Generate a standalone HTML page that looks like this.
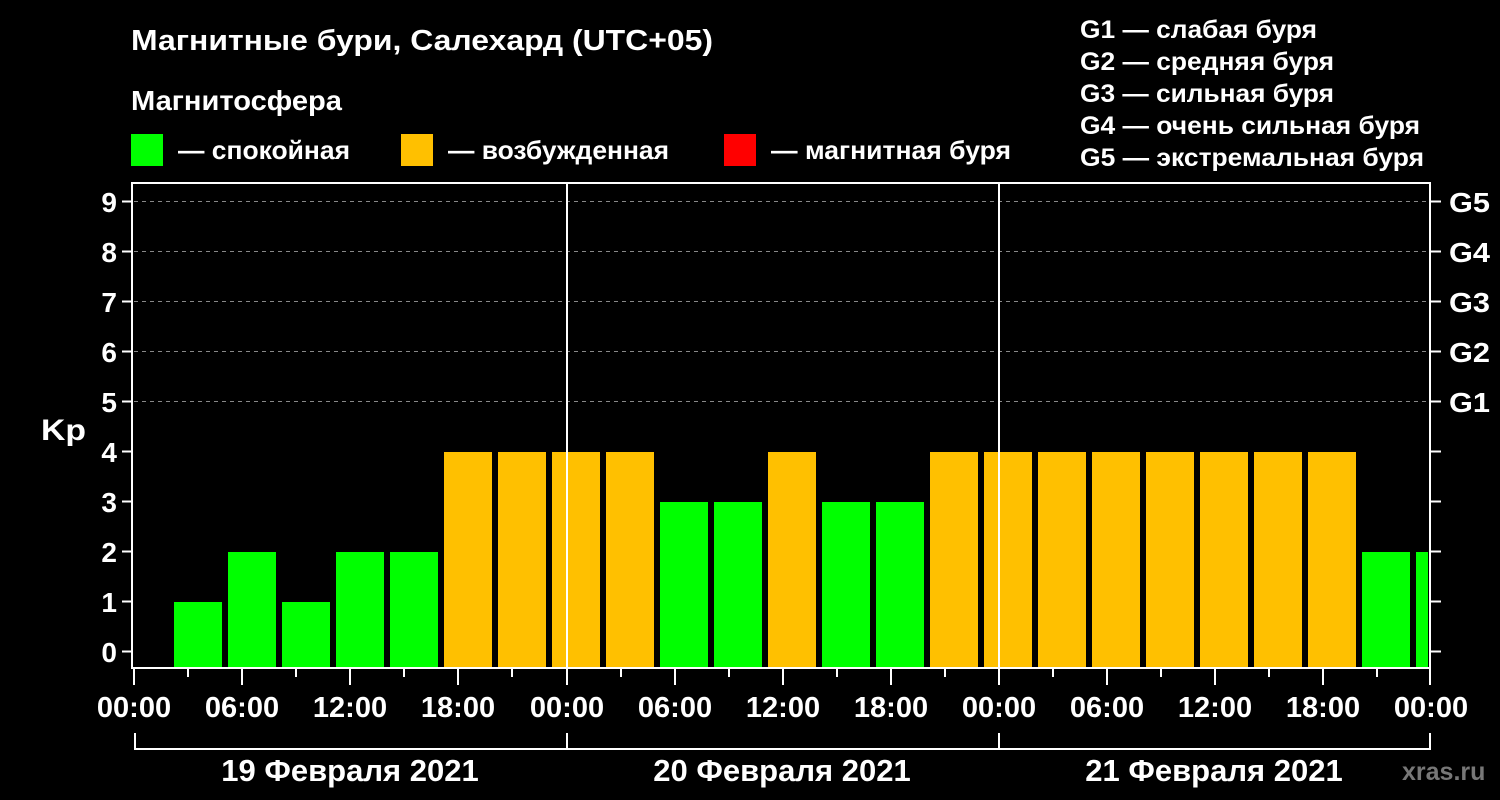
<!DOCTYPE html>
<html><head><meta charset="utf-8"><style>
html,body{margin:0;padding:0;background:#000;width:1500px;height:800px;overflow:hidden}
svg{display:block}
text{font-family:"Liberation Sans",sans-serif;font-weight:bold;fill:#fff}
</style></head><body>
<svg width="1500" height="800" viewBox="0 0 1500 800">
<text x="131" y="50" font-size="29" textLength="582" lengthAdjust="spacingAndGlyphs">Магнитные бури, Салехард (UTC+05)</text>
<text x="131" y="110" font-size="28" textLength="211" lengthAdjust="spacingAndGlyphs">Магнитосфера</text>
<rect x="131" y="134" width="32" height="32" fill="#00ff00"/>
<text x="178" y="159" font-size="26" textLength="172" lengthAdjust="spacingAndGlyphs">— спокойная</text>
<rect x="401" y="134" width="32" height="32" fill="#ffc000"/>
<text x="448" y="159" font-size="26" textLength="221" lengthAdjust="spacingAndGlyphs">— возбужденная</text>
<rect x="724" y="134" width="32" height="32" fill="#ff0000"/>
<text x="771" y="159" font-size="26" textLength="240" lengthAdjust="spacingAndGlyphs">— магнитная буря</text>
<g font-size="25">
<text x="1080" y="38" textLength="237" lengthAdjust="spacingAndGlyphs">G1 — слабая буря</text>
<text x="1080" y="70" textLength="254" lengthAdjust="spacingAndGlyphs">G2 — средняя буря</text>
<text x="1080" y="102" textLength="254" lengthAdjust="spacingAndGlyphs">G3 — сильная буря</text>
<text x="1080" y="134" textLength="340" lengthAdjust="spacingAndGlyphs">G4 — очень сильная буря</text>
<text x="1080" y="166" textLength="344" lengthAdjust="spacingAndGlyphs">G5 — экстремальная буря</text>
</g>
<g stroke="#888" stroke-width="1" stroke-dasharray="4,4">
<line x1="134" y1="201.5" x2="1430" y2="201.5"/>
<line x1="134" y1="251.5" x2="1430" y2="251.5"/>
<line x1="134" y1="301.5" x2="1430" y2="301.5"/>
<line x1="134" y1="351.5" x2="1430" y2="351.5"/>
<line x1="134" y1="401.5" x2="1430" y2="401.5"/>
</g>
<g>
<rect x="174" y="602" width="48" height="65" fill="#00ff00"/>
<rect x="228" y="552" width="48" height="115" fill="#00ff00"/>
<rect x="282" y="602" width="48" height="65" fill="#00ff00"/>
<rect x="336" y="552" width="48" height="115" fill="#00ff00"/>
<rect x="390" y="552" width="48" height="115" fill="#00ff00"/>
<rect x="444" y="452" width="48" height="215" fill="#ffc000"/>
<rect x="498" y="452" width="48" height="215" fill="#ffc000"/>
<rect x="552" y="452" width="48" height="215" fill="#ffc000"/>
<rect x="606" y="452" width="48" height="215" fill="#ffc000"/>
<rect x="660" y="502" width="48" height="165" fill="#00ff00"/>
<rect x="714" y="502" width="48" height="165" fill="#00ff00"/>
<rect x="768" y="452" width="48" height="215" fill="#ffc000"/>
<rect x="822" y="502" width="48" height="165" fill="#00ff00"/>
<rect x="876" y="502" width="48" height="165" fill="#00ff00"/>
<rect x="930" y="452" width="48" height="215" fill="#ffc000"/>
<rect x="984" y="452" width="48" height="215" fill="#ffc000"/>
<rect x="1038" y="452" width="48" height="215" fill="#ffc000"/>
<rect x="1092" y="452" width="48" height="215" fill="#ffc000"/>
<rect x="1146" y="452" width="48" height="215" fill="#ffc000"/>
<rect x="1200" y="452" width="48" height="215" fill="#ffc000"/>
<rect x="1254" y="452" width="48" height="215" fill="#ffc000"/>
<rect x="1308" y="452" width="48" height="215" fill="#ffc000"/>
<rect x="1362" y="552" width="48" height="115" fill="#00ff00"/>
<rect x="1416" y="552" width="12" height="115" fill="#00ff00"/>
</g>
<g stroke="#fff" stroke-width="2">
<line x1="567" y1="183" x2="567" y2="668"/>
<line x1="999" y1="183" x2="999" y2="668"/>
<rect x="132" y="183" width="1298" height="485" fill="none"/>
<path fill="none" d="M134 668V685M188 668V677M242 668V685M296 668V677M350 668V685M404 668V677M458 668V685M512 668V677M567 668V685M621 668V677M675 668V685M729 668V677M783 668V685M837 668V677M891 668V685M945 668V677M999 668V685M1053 668V677M1107 668V685M1161 668V677M1215 668V685M1269 668V677M1323 668V685M1377 668V677M1430 668V685"/>
<path fill="none" d="M122 201.5H132M122 251.5H132M122 301.5H132M122 351.5H132M122 401.5H132M122 451.5H132M122 501.5H132M122 551.5H132M122 601.5H132M122 651.5H132M1430 201.5H1441M1430 251.5H1441M1430 301.5H1441M1430 351.5H1441M1430 401.5H1441M1430 451.5H1441M1430 501.5H1441M1430 551.5H1441M1430 601.5H1441M1430 651.5H1441"/>
</g>
<g font-size="28" text-anchor="end">
<text x="117" y="212">9</text><text x="117" y="262">8</text><text x="117" y="312">7</text>
<text x="117" y="362">6</text><text x="117" y="412">5</text><text x="117" y="462">4</text>
<text x="117" y="512">3</text><text x="117" y="562">2</text><text x="117" y="612">1</text>
<text x="117" y="662">0</text>
</g>
<text x="41" y="440" font-size="30" textLength="45" lengthAdjust="spacingAndGlyphs">Kp</text>
<g font-size="28">
<text x="1449" y="212" textLength="41" lengthAdjust="spacingAndGlyphs">G5</text><text x="1449" y="262" textLength="41" lengthAdjust="spacingAndGlyphs">G4</text><text x="1449" y="312" textLength="41" lengthAdjust="spacingAndGlyphs">G3</text>
<text x="1449" y="362" textLength="41" lengthAdjust="spacingAndGlyphs">G2</text><text x="1449" y="412" textLength="41" lengthAdjust="spacingAndGlyphs">G1</text>
</g>
<g font-size="29" text-anchor="middle">
<text x="134" y="717">00:00</text><text x="242" y="717">06:00</text><text x="350" y="717">12:00</text><text x="458" y="717">18:00</text>
<text x="567" y="717">00:00</text><text x="675" y="717">06:00</text><text x="783" y="717">12:00</text><text x="891" y="717">18:00</text>
<text x="999" y="717">00:00</text><text x="1107" y="717">06:00</text><text x="1215" y="717">12:00</text><text x="1323" y="717">18:00</text>
<text x="1431" y="717">00:00</text>
<text x="350" y="781" font-size="31">19 Февраля 2021</text>
<text x="782" y="781" font-size="31">20 Февраля 2021</text>
<text x="1214" y="781" font-size="31">21 Февраля 2021</text>
</g>
<path d="M135 733V749H1430V733M567 733V749M999 733V749" stroke="#fff" stroke-width="2" fill="none"/>
<text x="1402" y="780" font-size="25" style="fill:#777">xras.ru</text>
</svg>
</body></html>
